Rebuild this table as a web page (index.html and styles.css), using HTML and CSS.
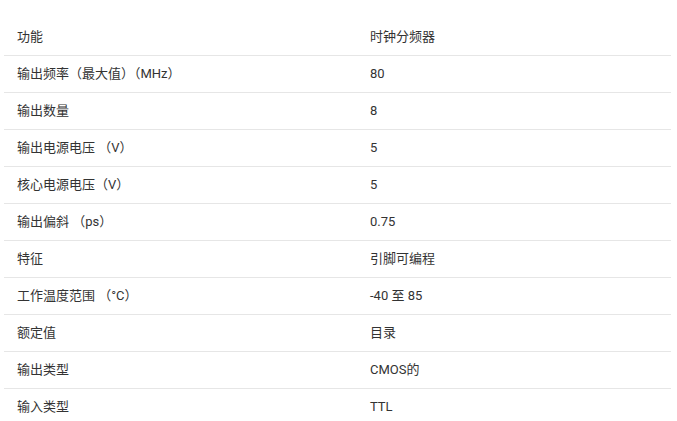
FILE: index.html
```html
<!DOCTYPE html>
<html lang="zh-CN">
<head>
<meta charset="utf-8">
<link rel="stylesheet" href="styles.css">
</head>
<body>
<table class="spec">
<tbody>
<tr><td class="k">功能</td><td class="v">时钟分频器</td></tr>
<tr><td class="k">输出频率（最大值）（MHz）</td><td class="v">80</td></tr>
<tr><td class="k">输出数量</td><td class="v">8</td></tr>
<tr><td class="k">输出电源电压 （V）</td><td class="v">5</td></tr>
<tr><td class="k">核心电源电压（V）</td><td class="v">5</td></tr>
<tr><td class="k">输出偏斜 （ps）</td><td class="v">0.75</td></tr>
<tr><td class="k">特征</td><td class="v">引脚可编程</td></tr>
<tr><td class="k">工作温度范围 （°C）</td><td class="v">-40 至 85</td></tr>
<tr><td class="k">额定值</td><td class="v">目录</td></tr>
<tr><td class="k">输出类型</td><td class="v">CMOS的</td></tr>
<tr><td class="k">输入类型</td><td class="v">TTL</td></tr>
</tbody>
</table>
</body>
</html>
```

FILE: styles.css
```css
html, body {
  margin: 0;
  padding: 0;
  background: #ffffff;
}
body {
  padding: 19px 6px 0 4px;
  font-family: Roboto, "Noto Sans CJK SC", sans-serif;
  font-size: 13px;
  color: #333333;
}
.spec {
  width: 667px;
  border-collapse: collapse;
}
.spec td {
  height: 36px;
  padding: 0 13px;
  border-bottom: 1px solid #e6e6e6;
  vertical-align: middle;
  line-height: 18px;
}
.spec tr:last-child td {
  border-bottom: none;
}
.spec .k {
  width: 327px;
}
```
